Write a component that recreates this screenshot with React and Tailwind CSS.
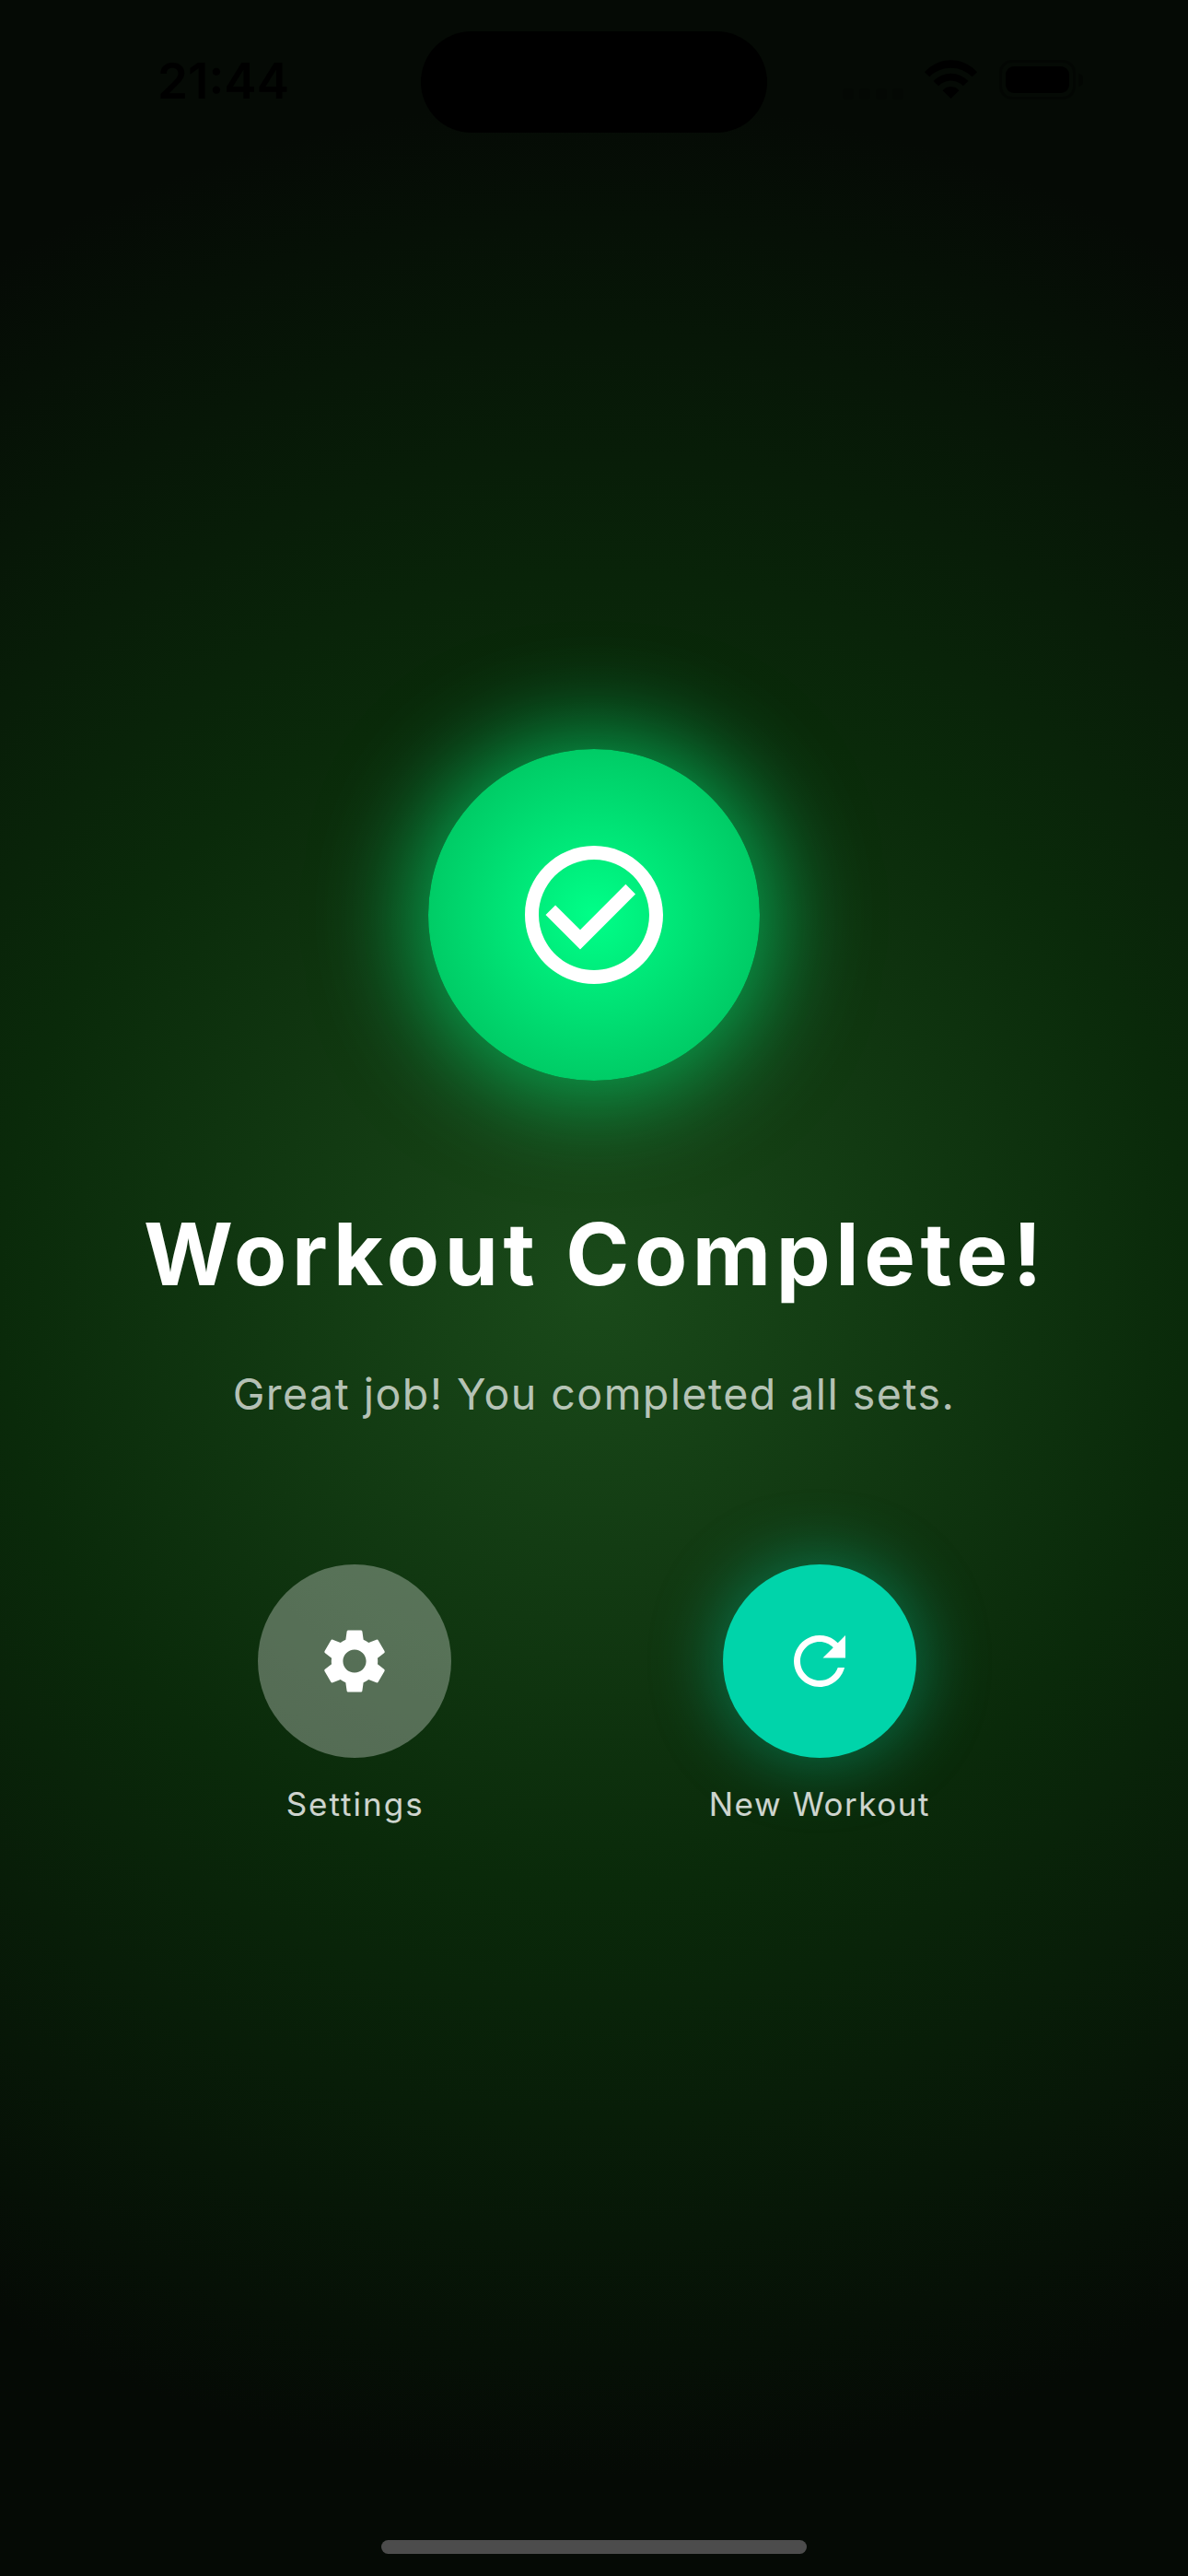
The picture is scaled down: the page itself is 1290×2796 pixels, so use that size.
import React from "react";
import { MdCheckCircleOutline, MdRefresh, MdSettings } from "react-icons/md";

function WifiIcon() {
  return (
    <svg viewBox="0 0 57 42" className="h-[42px] w-[57px] fill-black">
      <path d="M0 13.3A37.7 37.7 0 0 1 57 13.3L51.7 18.3A33 33 0 0 0 5.3 18.3Z" />
      <path d="M9.7 23A25.6 25.6 0 0 1 47.3 23L41.8 28.3A18.2 18.2 0 0 0 15.2 28.3Z" />
      <path d="M19.7 33.3A11 11 0 0 1 37.3 33.3L28.5 42Z" />
    </svg>
  );
}

function StatusBar() {
  return (
    <header className="grid h-[177px] shrink-0 grid-cols-[457px_376px_457px] items-start">
      <div className="pt-14 pl-[171px] text-[53px] leading-[64px] font-semibold text-black">
        21:44
      </div>
      <div className="mt-[34px] h-[110px] rounded-full bg-black" />
      <div className="flex pt-[65px] pl-[82px]">
        <div className="flex gap-[6px] pt-[31px]">
          <span className="size-3 rounded-[4px] bg-black/20" />
          <span className="size-3 rounded-[4px] bg-black/20" />
          <span className="size-3 rounded-[4px] bg-black/20" />
          <span className="size-3 rounded-[4px] bg-black/20" />
        </div>
        <div className="ml-[23px]">
          <WifiIcon />
        </div>
        <div className="ml-6 flex items-center gap-[3px]">
          <div className="h-[43px] w-[83px] rounded-[14px] border-[3px] border-black/35 p-1">
            <div className="h-full rounded-[9px] bg-black" />
          </div>
          <div className="h-[14px] w-[5px] rounded-r-full bg-black/40" />
        </div>
      </div>
    </header>
  );
}

export default function App() {
  return (
    <div className="flex h-[2796px] w-[1290px] flex-col overflow-hidden bg-[radial-gradient(circle_1290px_at_50%_50%,#1a4a1a_0%,#0a2a0a_50%,#050a05_100%)] font-['Inter',sans-serif]">
      <StatusBar />

      <main className="flex flex-1 flex-col items-center pt-[636px]">
        <div className="flex size-[360px] shrink-0 items-center justify-center rounded-full bg-[radial-gradient(circle_180px_at_center,#00ff88_0%,#00cc66_100%)] shadow-[0_0_107px_15px_rgba(0,255,136,0.6)]">
          <MdCheckCircleOutline className="size-[180px] text-white" />
        </div>

        <h1 className="mt-[130px] pl-[3px] text-[93.5px] leading-[116px] font-bold tracking-[5.6px] whitespace-nowrap text-white">
          <span className="tracking-[1px]">W</span>orkout Complete!
        </h1>
        <p className="mt-[65px] text-[46.5px] leading-[58px] font-normal tracking-[1.45px] whitespace-nowrap text-white/70">
          Great job! You completed all sets.
        </p>

        <div className="mt-[156px] flex w-full justify-evenly">
          <div className="flex flex-col items-center">
            <button className="flex size-[210px] items-center justify-center rounded-full bg-white/30">
              <MdSettings className="size-[84px] text-white" />
            </button>
            <span className="mt-[29px] pl-[2px] text-[35px] leading-[43px] tracking-[2px] text-white/80">
              Settings
            </span>
          </div>
          <div className="flex w-[241px] flex-col items-center">
            <button className="flex size-[210px] items-center justify-center rounded-full bg-[#00d4aa] shadow-[0_0_72px_6px_rgba(0,212,170,0.4)]">
              <MdRefresh className="size-[84px] text-white" />
            </button>
            <span className="mt-[29px] text-[35px] leading-[43px] tracking-[1.5px] whitespace-nowrap text-white/80">
              New Workout
            </span>
          </div>
        </div>
      </main>

      <footer className="flex justify-center pb-6">
        <div className="h-[15px] w-[462px] rounded-full bg-[#4c4c4c]" />
      </footer>
    </div>
  );
}
